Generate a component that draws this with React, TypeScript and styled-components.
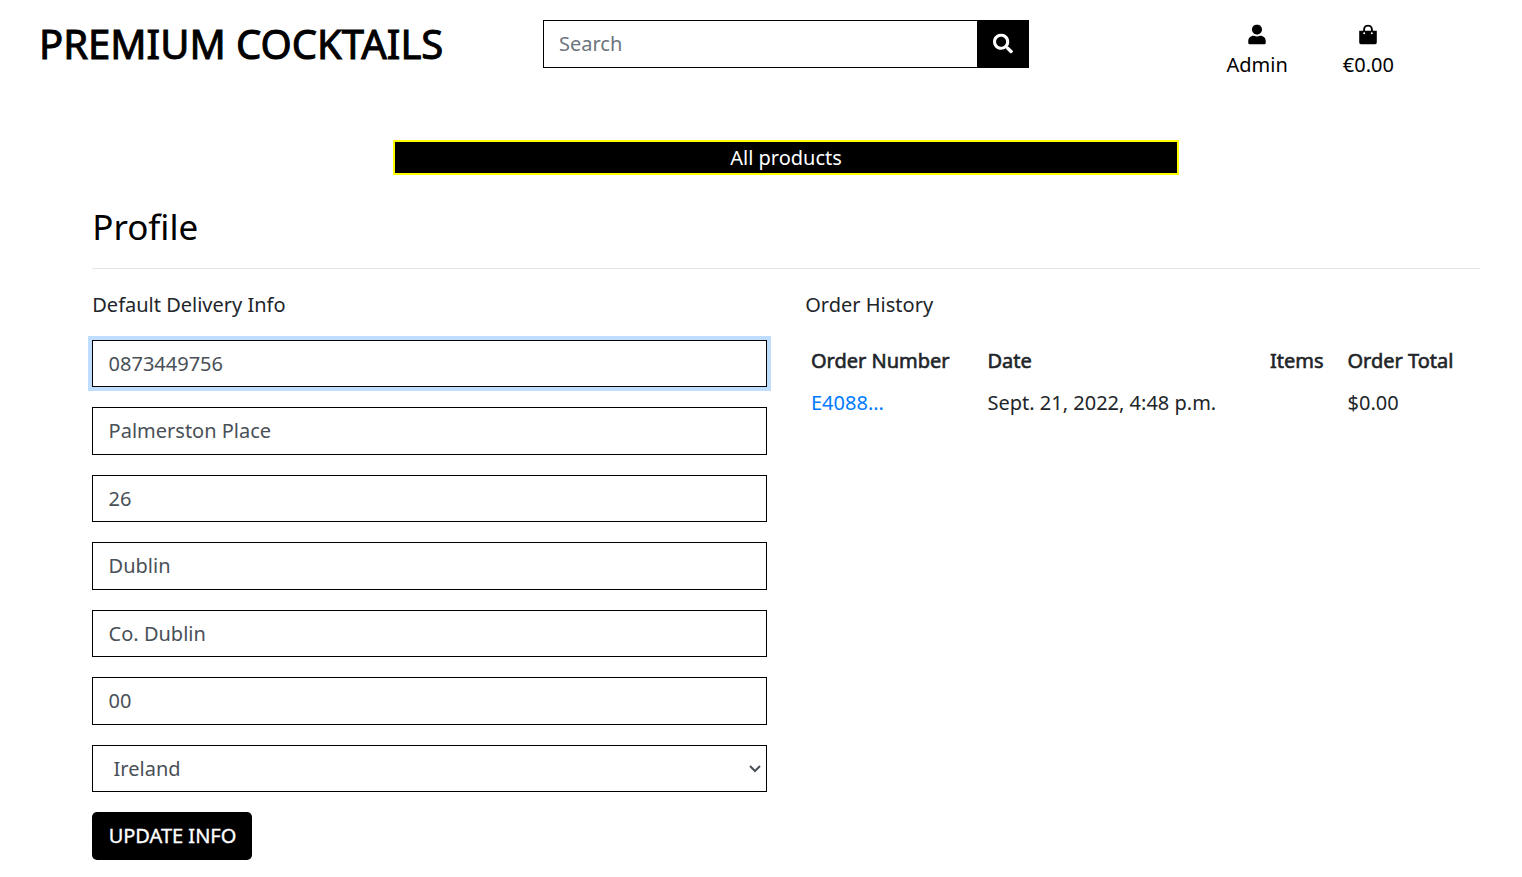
import React from 'react';
import styled, { createGlobalStyle } from 'styled-components';
import { FaSearch, FaUser } from 'react-icons/fa';

const GlobalStyle = createGlobalStyle`
  *, *::before, *::after { box-sizing: border-box; }
  html { font-size: 20px; overflow: hidden; }
  body { margin: 0; background: #fff; color: #212529; font-family: 'Noto Sans', sans-serif; font-size: 20px; line-height: 1.5; }
  input, select, button { font: inherit; }
`;
const Header = styled.header`display: flex; height: 140px; padding-left: 39px;`;
const Brand = styled.h1`margin: 14px 0 0; width: 504px; font-size: 40px; line-height: 60px; font-weight: 400; color: #000; -webkit-text-stroke: 1px #000; letter-spacing: 0; white-space: nowrap;`;
const Search = styled.form`display: flex; margin-top: 20px; width: 486px; height: 48px;`;
const SearchInput = styled.input`flex: 1; min-width: 0; padding: 7px 15px; border: 1px solid #000; border-radius: 0; outline: 0; &::placeholder { color: #6c757d; opacity: 1; }`;
const SearchButton = styled.button`display: grid; place-items: center; width: 51px; padding: 0 2px 1px 0; border: 0; background: #000; color: #fff; svg { transform: translateY(-.5px); }`;
const Links = styled.nav`display: flex; gap: 55px; margin: 24.5px 0 0 197.5px;`;
const NavItem = styled.a`display: flex; flex-direction: column; align-items: center; gap: 5.5px; color: #000; line-height: 30px; svg { display: block; transform: translateY(-.5px); }`;
const Products = styled.a`display: block; width: 786px; height: 35px; margin-left: 393px; border: 2px solid #ff0; background: #000; color: #fff; text-align: center; line-height: 31px;`;
const Main = styled.main`padding: 31px 42px 0 92px;`;
const Title = styled.h2`margin: 0; height: 63px; padding-bottom: 20px; border-bottom: 1px solid #e5e5e5; font-size: 35px; line-height: 42px; font-weight: 400; color: #000; text-indent: .25px;`;
const Columns = styled.div`display: grid; grid-template-columns: 675px 675px; gap: 38px; padding-top: 20.75px;`;
const Caption = styled.p`margin: 0 0 20px; color: #212529; text-indent: .25px;`;
const Form = styled.form`display: flex; flex-direction: column; align-items: flex-start; gap: 20px;`;
const Field = styled.input<{ $focused?: boolean }>`width: 100%; height: 47.5px; padding: 7.2px 15.6px 7.8px; border: 1px solid #000; border-radius: 0; outline: 0; color: #495057; background: #fff; box-shadow: ${p => (p.$focused ? '0 0 0 4px #bfdeff' : 'none')};`;
const SelectWrap = styled.div`display: grid; width: 100%; height: 47.5px; align-items: center; > * { grid-area: 1 / 1; }`;
const Country = styled.select`appearance: none; width: 100%; height: 47.5px; padding: 7.5px 0 7.5px 20.6px; border: 1px solid #000; border-radius: 0; background: #fff; color: #495057; outline: 0;`;
const Chevron = styled.svg`justify-self: end; margin-right: 5px; width: 14px; height: 10px; pointer-events: none;`;
const Submit = styled.button`height: 47.5px; width: 160px; padding: 0 0 0 1px; border: 0; border-radius: 5px; background: #000; color: #fff; -webkit-text-stroke: .35px #fff;`;
const Orders = styled.table`width: 675px; margin-top: .25px; border-collapse: collapse; table-layout: fixed; th, td { height: 42px; padding: 6px; text-align: left; font-weight: 400; line-height: 30px; white-space: nowrap; } th { -webkit-text-stroke: .6px #212529; } th:nth-child(even), td:nth-child(even) { padding-left: 6.5px; }`;
const Col = styled.col<{ $width?: number }>`width: ${p => (p.$width ? `${p.$width}px` : 'auto')};`;
const OrderLink = styled.a`color: #007bff;`;

const details = ['0873449756', 'Palmerston Place', '26', 'Dublin', 'Co. Dublin', '00'];

const BagIcon = () => (
  <svg width="20" height="20" viewBox="0 0 20 20" aria-hidden="true">
    <path d="M1.2 6.3h17.6v11.2a2.5 2.5 0 0 1-2.5 2.5H3.7a2.5 2.5 0 0 1-2.5-2.5z" fill="currentColor" />
    <path d="M6.1 8.4V5a3.9 3.9 0 0 1 7.8 0v3.4" fill="none" stroke="currentColor" strokeWidth="1.9" />
    <circle cx="6.2" cy="8.7" r="1" fill="#fff" />
    <circle cx="13.8" cy="8.7" r="1" fill="#fff" />
  </svg>
);

export default function App() {
  return (
    <>
      <GlobalStyle />
      <Header>
        <Brand>PREMIUM COCKTAILS</Brand>
        <Search>
          <SearchInput placeholder="Search" />
          <SearchButton type="button" aria-label="Search"><FaSearch size={20} /></SearchButton>
        </Search>
        <Links>
          <NavItem><FaUser size={20} />Admin</NavItem>
          <NavItem><BagIcon />€0.00</NavItem>
        </Links>
      </Header>
      <Products>All products</Products>
      <Main>
        <Title>Profile</Title>
        <Columns>
          <section>
            <Caption>Default Delivery Info</Caption>
            <Form>
              {details.map((value, i) => <Field key={value} defaultValue={value} $focused={i === 0} />)}
              <SelectWrap>
                <Country defaultValue="Ireland"><option>Ireland</option></Country>
                <Chevron viewBox="0 0 14 10"><path d="M2 2l5 5 5-5" fill="none" stroke="#495057" strokeWidth="2" /></Chevron>
              </SelectWrap>
              <Submit type="button">UPDATE INFO</Submit>
            </Form>
          </section>
          <section>
            <Caption>Order History</Caption>
            <Orders>
              <colgroup><Col $width={176} /><Col $width={283} /><Col $width={77} /><Col /></colgroup>
              <thead><tr><th>Order Number</th><th>Date</th><th>Items</th><th>Order Total</th></tr></thead>
              <tbody><tr><td><OrderLink>E4088...</OrderLink></td><td>Sept. 21, 2022, 4:48 p.m.</td><td /><td>$0.00</td></tr></tbody>
            </Orders>
          </section>
        </Columns>
      </Main>
    </>
  );
}
